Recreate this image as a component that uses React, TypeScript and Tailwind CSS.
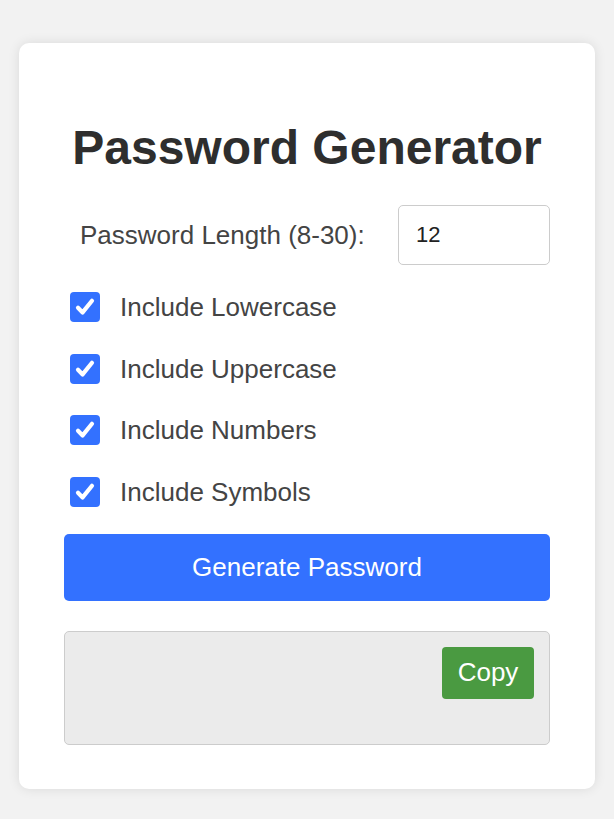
const options = ['Include Lowercase', 'Include Uppercase', 'Include Numbers', 'Include Symbols'];

const CheckBox = () => (
  <span className="flex h-[30px] w-[30px] shrink-0 items-center justify-center rounded-[4px] bg-[#3371ff]">
    <svg viewBox="0 0 24 24" className="h-[24px] w-[24px]" fill="none">
      <path d="M5 12.8 L9.6 17.4 L19 5.8" stroke="white" strokeWidth="4.2" strokeLinecap="round" strokeLinejoin="round" />
    </svg>
  </span>
);

export default function App() {
  return (
    <div className="min-h-[819px] bg-[#f2f2f2] px-[19px] pt-[43px] pb-[30px] font-['Liberation_Sans',Arial,sans-serif]">
      <div className="flex flex-col rounded-[10px] bg-white px-[45px] pt-[76px] pb-[44px] shadow-[0_0_12px_rgba(0,0,0,0.1)]">
        <h1 className="text-center text-[48px] leading-[58px] font-bold text-[#2e2e2e]">Password Generator</h1>

        <div className="mt-[28px] flex items-center justify-between pl-4">
          <label className="text-[26px] leading-[30px] text-[#444]">Password Length (8-30):</label>
          <input
            type="number"
            defaultValue={12}
            className="h-[60px] w-[152px] rounded-[5px] border border-[#ccc] bg-white px-[17px] text-[22px] text-[#222] outline-none [appearance:textfield]"
          />
        </div>

        <div className="mt-[27px] flex flex-col gap-[31.5px] pl-[6px]">
          {options.map((o) => (
            <label key={o} className="flex h-[30px] items-center gap-[20px] text-[26px] leading-[30px] text-[#444]">
              <CheckBox />
              {o}
            </label>
          ))}
        </div>

        <button className="mt-[27px] h-[67px] w-full rounded-[5px] bg-[#3371ff] text-[26px] text-white">
          Generate Password
        </button>

        <div className="relative mt-[30px] h-[114px] rounded-[5px] border border-[#ccc] bg-[#ebebeb]">
          <button className="absolute top-[15px] right-[15px] h-[52px] w-[92px] rounded-[4px] bg-[#4a9a41] text-[26px] text-white">
            Copy
          </button>
        </div>
      </div>
    </div>
  );
}
